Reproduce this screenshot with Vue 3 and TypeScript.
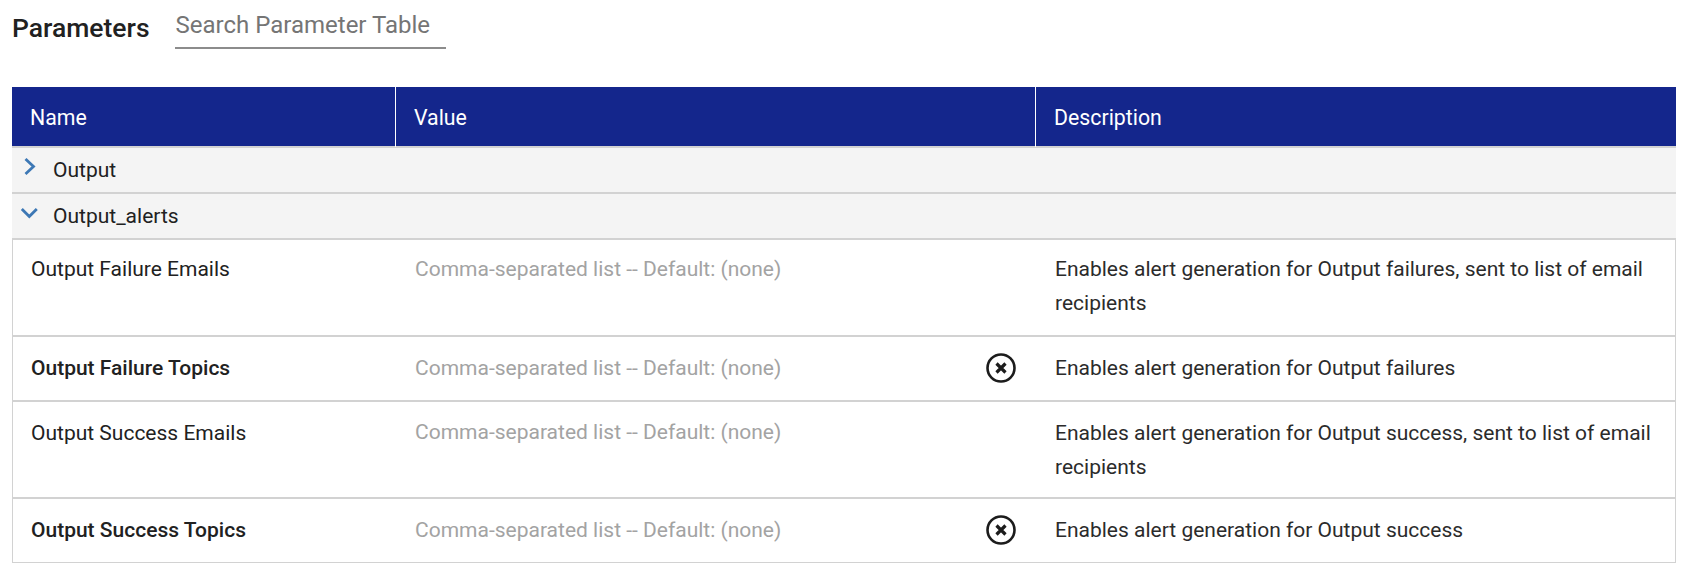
<script setup lang="ts">
interface Row { name: string; strong: boolean; desc: string; clear: boolean }
const rows: Row[] = [
  { name: 'Output Failure Emails', strong: false, desc: 'Enables alert generation for Output failures, sent to list of email recipients', clear: false },
  { name: 'Output Failure Topics', strong: true, desc: 'Enables alert generation for Output failures', clear: true },
  { name: 'Output Success Emails', strong: false, desc: 'Enables alert generation for Output success, sent to list of email recipients', clear: false },
  { name: 'Output Success Topics', strong: true, desc: 'Enables alert generation for Output success', clear: true },
]
</script>

<template>
  <div class="page">
    <div class="top">
      <h2 class="title">Parameters</h2>
      <div class="search"><input class="search-input" placeholder="Search Parameter Table" /></div>
    </div>
    <div class="table">
      <div class="head">
        <div class="hcell">Name</div>
        <div class="hcell">Value</div>
        <div class="hcell">Description</div>
      </div>
      <div class="group">
        <span class="chev-box closed">
          <svg width="16" height="18" viewBox="0 0 16 18"><path d="M3.5 1 L11.5 8.5 L3.5 16" fill="none" stroke="#3d78b5" stroke-width="2.8" /></svg>
        </span>
        <span>Output</span>
      </div>
      <div class="group">
        <span class="chev-box open">
          <svg width="19" height="18" viewBox="0 0 19 18"><path d="M1.8 2 L9.3 9.5 L16.8 2" fill="none" stroke="#3d78b5" stroke-width="2.8" /></svg>
        </span>
        <span>Output_alerts</span>
      </div>
      <div v-for="(r, i) in rows" :key="r.name" class="row" :class="'row-' + i">
        <div class="cell name" :class="{ strong: r.strong }">{{ r.name }}</div>
        <div class="cell value">
          <span class="ph">Comma-separated list -- Default: (none)</span>
          <svg v-if="r.clear" class="clear" width="32" height="32" viewBox="0 0 32 32">
            <circle cx="16" cy="16" r="13.5" fill="none" stroke="#1c1c1c" stroke-width="2.6" />
            <path d="M11.5 11.5 L20.5 20.5 M20.5 11.5 L11.5 20.5" fill="none" stroke="#1c1c1c" stroke-width="3.2" />
          </svg>
        </div>
        <div class="cell desc">{{ r.desc }}</div>
      </div>
    </div>
  </div>
</template>

<style>
html, body { background: #fff; }
</style>

<style scoped>
.page {
  font-family: Roboto, "Liberation Sans", sans-serif;
  color: #212121;
  padding: 0 24px 0 12px;
}
.top {
  display: flex;
  align-items: flex-start;
  height: 87px;
}
.title {
  margin: 13px 25px 0 0;
  font-size: 26.5px;
  font-weight: 500;
  line-height: 30px;
}
.search {
  width: 271px;
  height: 47px;
  border-bottom: 2px solid #8c8c8c;
}
.search-input {
  width: 100%;
  height: 100%;
  border: 0;
  outline: 0;
  padding: 3px 0 0 1px;
  box-sizing: border-box;
  background: transparent;
  font: 400 24px Roboto, sans-serif;
}
.search-input::placeholder { color: #757575; opacity: 1; }
.head {
  display: grid;
  grid-template-columns: 383px 640px 641px;
  background: #14268c;
  height: 59px;
  border-bottom: 2px solid #d2d2d2;
}
.hcell {
  color: #fff;
  font-size: 21.3px;
  font-weight: 400;
  line-height: 59px;
  padding: 1px 0 0 18px;
  box-sizing: border-box;
  border-left: 1px solid #fff;
}
.hcell:first-child { border-left: 0; }
.group {
  display: flex;
  align-items: center;
  height: 46px;
  background: #f4f4f4;
  border-bottom: 2px solid #d2d2d2;
  box-sizing: border-box;
  font-size: 21px;
  color: #212121;
}
.chev-box {
  width: 41px;
  flex: none;
  display: flex;
  box-sizing: border-box;
}
.chev-box.closed { padding-left: 10px; margin-top: -6px; }
.chev-box.open { padding-left: 8px; }
.row {
  display: grid;
  grid-template-columns: 383px 640px 639px;
  border-left: 1px solid #d2d2d2;
  border-right: 1px solid #d2d2d2;
  border-bottom: 2px solid #d2d2d2;
  font-size: 21px;
  line-height: 33.5px;
  min-height: 63px;
}
.row-3 { border-bottom-width: 1px; }
.cell { padding: 15px 18px 0; }
.row-0 .cell { padding-top: 13px; }
.strong { font-weight: 500; }
.value { display: flex; justify-content: space-between; align-items: flex-start; padding-left: 19px; }
.ph { color: #a3a3a3; }
.row-2 .ph { margin-top: -1px; }
.clear { flex: none; margin: 0 1px 0 0; }
.desc { padding-left: 19px; padding-bottom: 13px; color: #2b2b2b; }
.row-0 .desc { padding-bottom: 15px; }
</style>
